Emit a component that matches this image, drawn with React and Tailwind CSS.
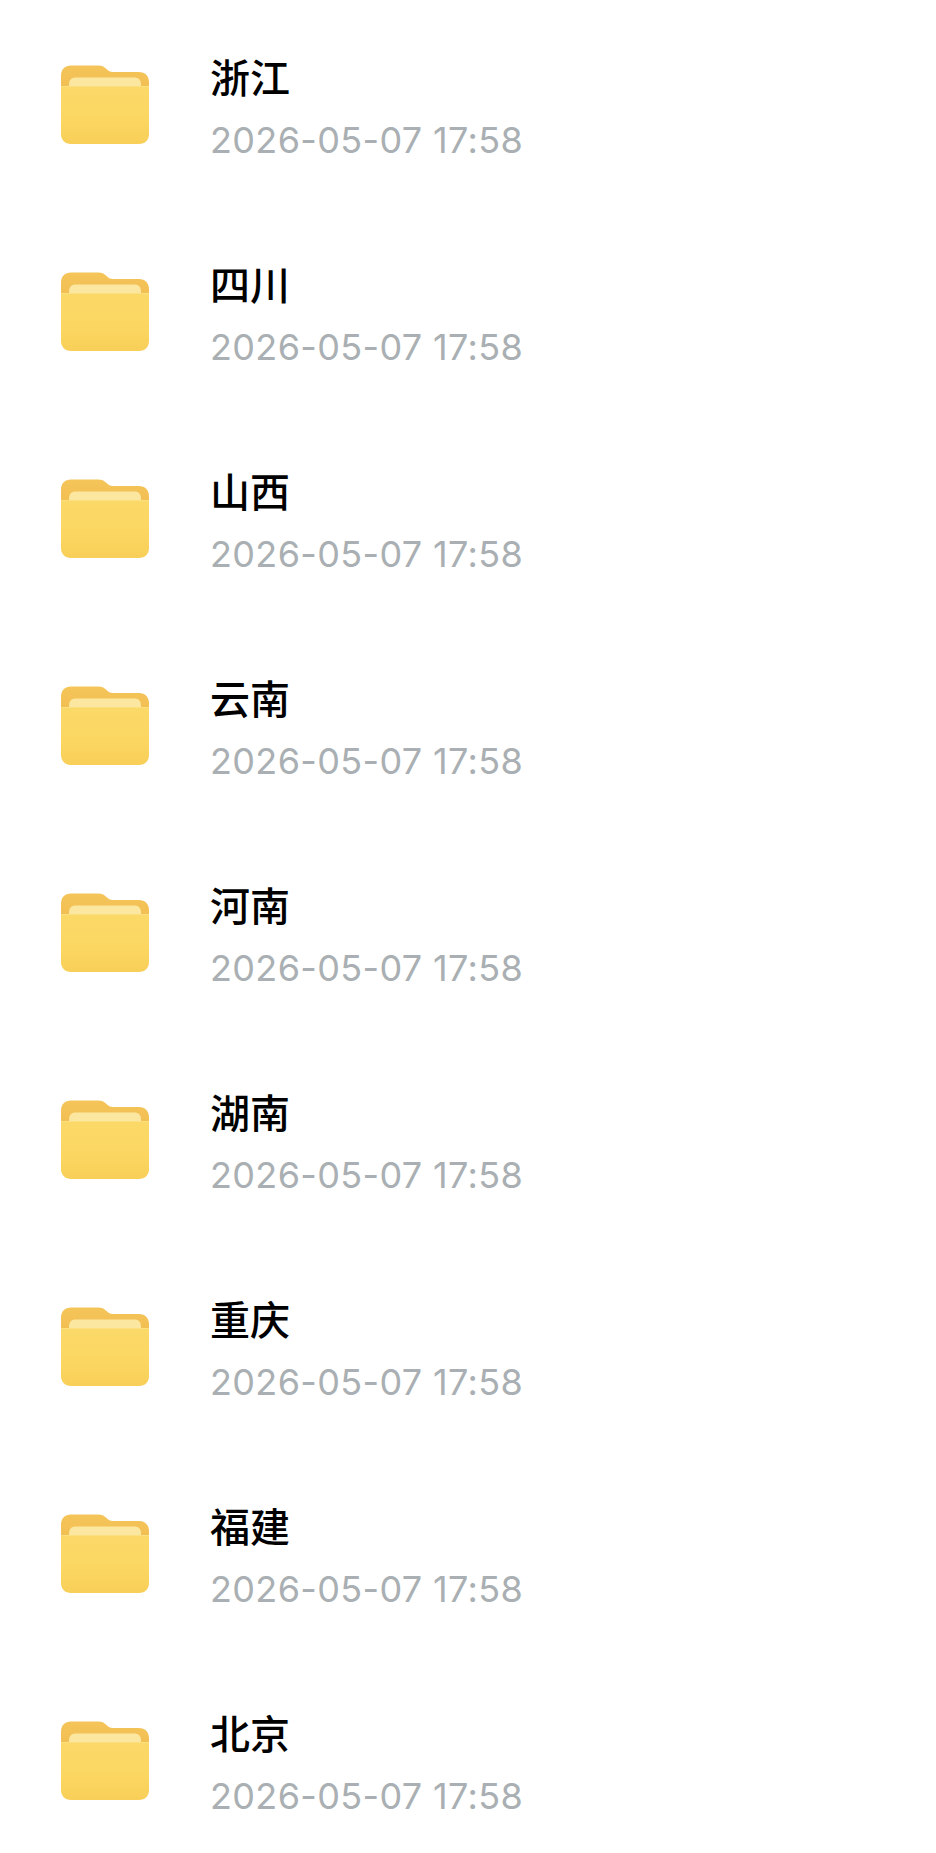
import React from 'react';

const provinces = ['浙江', '四川', '山西', '云南', '河南', '湖南', '重庆', '福建', '北京'];

const FolderIcon = ({ id }) => (
  <svg width="90" height="80" viewBox="0 0 90 80" className="shrink-0">
    <defs>
      <linearGradient id={`back-${id}`} x1="0" y1="0" x2="0" y2="1">
        <stop offset="0" stopColor="#f5c55a" />
        <stop offset="1" stopColor="#efb94c" />
      </linearGradient>
      <linearGradient id={`front-${id}`} x1="0" y1="0" x2="0" y2="1">
        <stop offset="0" stopColor="#fbd968" />
        <stop offset="0.55" stopColor="#fbd762" />
        <stop offset="1" stopColor="#f8cf58" />
      </linearGradient>
    </defs>
    <path
      d="M1 11C1 4 5 0.500 11 0.500H38C42 0.500 44 1.500 46.500 4C48.500 6 50 7 53 7H79C85 7 89 11 89 17V40H1Z"
      fill={`url(#back-${id})`}
    />
    <path d="M9 20C9 15 11 12.500 16 12.500H74C79 12.500 81 15 81 20V26H9Z" fill="#fbe7a0" />
    <path
      d="M1 21H89V69C89 75 85 79 79 79H11C5 79 1 75 1 69Z"
      fill={`url(#front-${id})`}
    />
    <path d="M1 21H89V22H1Z" fill="#fcdf80" />
  </svg>
);

const FolderRow = ({ name, id }) => (
  <div className="flex h-[207px] shrink-0 items-start pl-[60px]">
    <div className="pt-[65px]">
      <FolderIcon id={id} />
    </div>
    <div className="ml-[60px] flex flex-col pt-[53px]">
      <div className="h-[46px] text-[40px] leading-[46px] font-medium text-black font-['Noto_Sans_CJK_SC',sans-serif]">
        {name}
      </div>
      <div className="mt-[19px] text-[36px] leading-[44px] tracking-[0.35px] text-[#a9afb2] font-['Inter',sans-serif]">
        2026-05-07 17:58
      </div>
    </div>
  </div>
);

export default function App() {
  return (
    <div className="flex h-[1853px] w-[936px] flex-col overflow-hidden bg-white">
      {provinces.map((name, i) => (
        <FolderRow key={name} name={name} id={i} />
      ))}
    </div>
  );
}
